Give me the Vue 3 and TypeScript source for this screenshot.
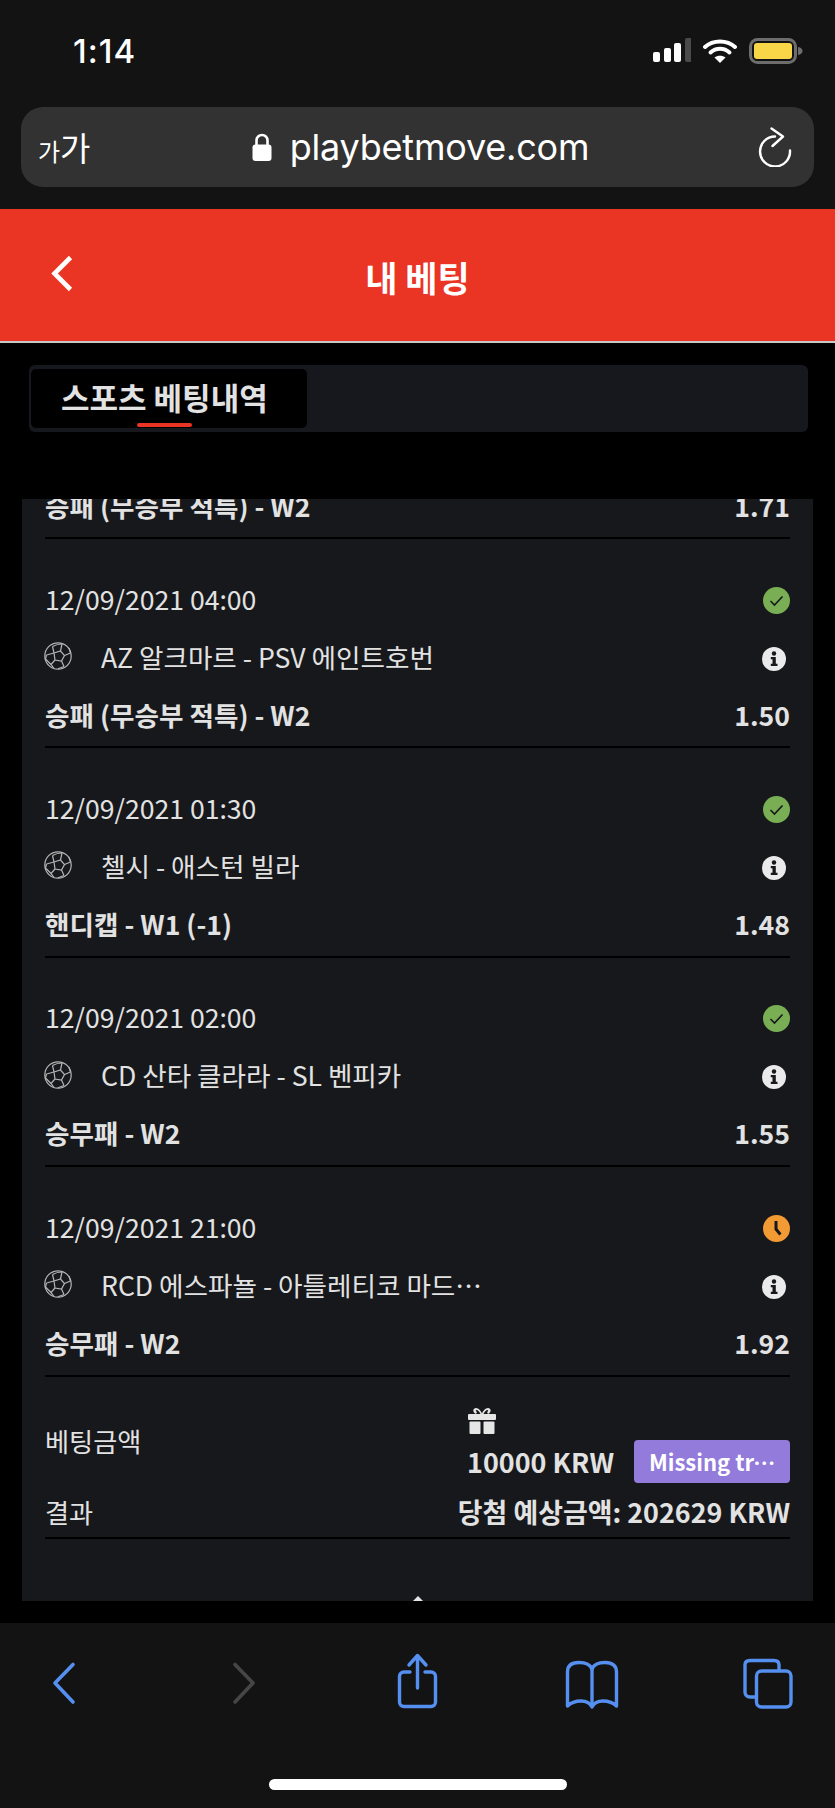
<script setup lang="ts">
interface Bet {
  date: string;
  game: string;
  market: string;
  odds: string;
  status: 'won' | 'pending';
}

const bets: Bet[] = [
  { date: '12/09/2021 04:00', game: 'AZ 알크마르 - PSV 에인트호번', market: '승패 (무승부 적특) - W2', odds: '1.50', status: 'won' },
  { date: '12/09/2021 01:30', game: '첼시 - 애스턴 빌라', market: '핸디캡 - W1 (-1)', odds: '1.48', status: 'won' },
  { date: '12/09/2021 02:00', game: 'CD 산타 클라라 - SL 벤피카', market: '승무패 - W2', odds: '1.55', status: 'won' },
  { date: '12/09/2021 21:00', game: 'RCD 에스파뇰 - 아틀레티코 마드리드', market: '승무패 - W2', odds: '1.92', status: 'pending' },
];
</script>

<template>
  <div class="screen">
    <!-- Browser chrome, top -->
    <header class="browser-top">
      <div class="status-bar">
        <span class="time">1:14</span>
        <div class="status-icons">
          <svg width="38" height="25" viewBox="0 0 38 25">
            <rect x="0" y="14" width="7" height="10" rx="2" fill="#fff" />
            <rect x="11" y="10" width="7" height="14" rx="2" fill="#fff" />
            <rect x="21" y="5" width="7" height="19" rx="2" fill="#fff" />
            <rect x="32" y="0" width="7" height="24" rx="2" fill="#4a4a4a" />
          </svg>
          <svg width="34" height="25" viewBox="0 0 34 25">
            <path d="M2 9C10 1.500 24 1.500 32 9" fill="none" stroke="#fff" stroke-width="4" stroke-linecap="round" />
            <path d="M7.500 14.500C13 9.500 21 9.500 26.500 14.500" fill="none" stroke="#fff" stroke-width="4" stroke-linecap="round" />
            <path d="M17 25L11.500 19.500C14.500 17 19.500 17 22.500 19.500Z" fill="#fff" />
          </svg>
          <svg width="54" height="26" viewBox="0 0 54 26">
            <rect x="1.500" y="1.500" width="45" height="23" rx="7" fill="none" stroke="#6d6d6d" stroke-width="3" />
            <rect x="5" y="5" width="38" height="16" rx="3" fill="#f8d648" />
            <path d="M49 9C52 9.500 53.500 11 53.500 13C53.500 15 52 16.500 49 17Z" fill="#6d6d6d" />
          </svg>
        </div>
      </div>
      <div class="url-bar">
        <span class="text-size"><small>가</small>가</span>
        <div class="url">
          <svg width="20" height="28" viewBox="0 0 20 28">
            <path d="M4.500 13V7.500C4.500 4 7 2 10 2C13 2 15.500 4 15.500 7.500V13" fill="none" stroke="#fff" stroke-width="2.600" />
            <rect x="0.500" y="11.500" width="19" height="16.500" rx="3" fill="#fff" />
          </svg>
          <span>playbetmove.com</span>
        </div>
        <svg class="reload" width="34" height="40" viewBox="0 0 34 40">
          <path d="M32 23.500A15 15 0 1 1 17 9.500" fill="none" stroke="#fff" stroke-width="2.400" stroke-linecap="round" />
          <path d="M13.500 1.500L25 9.500L14.500 19" fill="none" stroke="#fff" stroke-width="2.400" stroke-linecap="round" stroke-linejoin="round" />
        </svg>
      </div>
    </header>

    <!-- Page header -->
    <div class="page-header">
      <svg class="back" width="22" height="37" viewBox="0 0 22 37">
        <path d="M19.500 2.500L3.500 18.500L19.500 34.500" fill="none" stroke="#fff" stroke-width="4.600" />
      </svg>
      <h1>내 베팅</h1>
    </div>

    <!-- Tabs -->
    <div class="tabs">
      <div class="tab">
        스포츠 베팅내역
        <i class="tab-line" />
      </div>
    </div>

    <!-- Coupon -->
    <section class="card">
      <div class="market-row clipped">
        <span>승패 (무승부 적특) - W2</span>
        <span>1.71</span>
      </div>

      <article v-for="bet in bets" :key="bet.date" class="bet">
        <div class="bet-date">
          <span>{{ bet.date }}</span>
          <svg v-if="bet.status === 'won'" width="27" height="27" viewBox="0 0 27 27">
            <circle cx="13.500" cy="13.500" r="13.500" fill="#7aae55" />
            <path d="M7.500 14L11.500 18L19.500 9.500" fill="none" stroke="#17181c" stroke-width="1.600" />
          </svg>
          <svg v-else width="27" height="27" viewBox="0 0 27 27">
            <circle cx="13.500" cy="13.500" r="13.500" fill="#f29a33" />
            <path d="M11.500 6H14.500V13.500L18.500 18.500L16.300 20.500L11.500 14.800Z" fill="#17181c" />
          </svg>
        </div>
        <div class="bet-game">
          <svg class="ball" width="28" height="28" viewBox="0 0 28 28" fill="none" stroke="#b4b4b4" stroke-width="1.200">
            <circle cx="14" cy="14" r="13.200" />
            <path d="M10 11L16.500 9L20.500 13.500L17.500 19L11 18Z" />
            <path d="M10 11L8.500 4.500M16.500 9L18 2M20.500 13.500L26.500 11M17.500 19L20 24.500M11 18L7 22.500M10 11L2.500 13" />
            <path d="M8.500 4.500C12 2.500 15 2 18 2M2.500 13L1.500 17L7 22.500L10 26.500M20 24.500L14 26.800M26.500 11L25 6" />
          </svg>
          <span class="game-name">{{ bet.game }}</span>
          <svg class="info" width="24" height="24" viewBox="0 0 24 24">
            <circle cx="12" cy="12" r="12" fill="#eaeaea" />
            <circle cx="12" cy="6.500" r="2.200" fill="#17181c" />
            <path d="M8.800 10H13.800V16.800H15.500V19H8.800V16.800H10.500V12.200H8.800Z" fill="#17181c" />
          </svg>
        </div>
        <div class="market-row">
          <span>{{ bet.market }}</span>
          <span>{{ bet.odds }}</span>
        </div>
      </article>

      <div class="summary">
        <div class="summary-row stake-row">
          <span class="label stake-label">베팅금액</span>
          <div class="stake">
            <svg width="28" height="27" viewBox="0 0 28 27" fill="#e6e6e6">
              <path d="M8 7C4 5 5 1 8 1C10.500 1 13 4 14 6.500C15 4 17.500 1 20 1C23 1 24 5 20 7L19 5C20.500 4.500 20.500 3 19.500 3C18 3 16.500 5 15.500 7H12.500C11.500 5 10 3 8.500 3C7.500 3 7.500 4.500 9 5Z" />
              <rect x="0" y="7" width="28" height="6" rx="1" />
              <rect x="1.500" y="14.500" width="11" height="12.500" rx="1" />
              <rect x="15.500" y="14.500" width="11" height="12.500" rx="1" />
            </svg>
            <div class="stake-line">
              <span class="amount">10000 KRW</span>
              <span class="badge">Missing translation</span>
            </div>
          </div>
        </div>
        <div class="summary-row result-row">
          <span class="label">결과</span>
          <span class="amount">당첨 예상금액: 202629 KRW</span>
        </div>
      </div>
      <i class="caret" />
    </section>

    <!-- Browser chrome, bottom -->
    <footer class="browser-bottom">
      <div class="toolbar">
        <svg width="64" height="64" viewBox="0 0 64 64" fill="none" stroke="#5590f0" stroke-width="3.600" stroke-linecap="round" stroke-linejoin="round">
          <path d="M41 15.500L23 34L41 53" />
        </svg>
        <svg width="64" height="64" viewBox="0 0 64 64" fill="none" stroke="#464646" stroke-width="3.600" stroke-linecap="round" stroke-linejoin="round">
          <path d="M27 15.500L45 34L27 53" />
        </svg>
        <svg width="64" height="64" viewBox="0 0 64 64" fill="none" stroke="#5590f0" stroke-width="3.400" stroke-linecap="round" stroke-linejoin="round">
          <path d="M26 23H20C17.500 23 15.500 25 15.500 27.500V53C15.500 55.500 17.500 57.500 20 57.500H47C49.500 57.500 51.500 55.500 51.500 53V27.500C51.500 25 49.500 23 47 23H41" />
          <path d="M33.500 39V7M25 16L33.500 6.500L42 16" />
        </svg>
        <svg width="64" height="64" viewBox="0 0 64 64" fill="none" stroke="#5590f0" stroke-width="3.400" stroke-linejoin="round">
          <path d="M33 20C31 15 26 13.500 20 13.500C12 13.500 8.500 17 8.500 23V57C13 52.500 18 52 22 52C27 52 31 54 33 58C35 54 39 52 44 52C48 52 53 52.500 57.500 57V23C57.500 17 54 13.500 46 13.500C40 13.500 35 15 33 20Z" />
          <path d="M33 20V57" />
        </svg>
        <svg width="64" height="64" viewBox="0 0 64 64" fill="none" stroke="#5590f0" stroke-width="3.400">
          <path d="M20 48H15C12 48 10 46 10 43V16C10 13 12 11.500 15 11.500H39C42 11.500 44 13 44 16V21" />
          <rect x="21.500" y="22" width="34.500" height="36" rx="5" />
        </svg>
      </div>
      <div class="home-bar" />
    </footer>
  </div>
</template>

<style>
html, body { background: #000; }
</style>

<style scoped>
.screen {
  width: 835px;
  height: 1808px;
  display: flex;
  flex-direction: column;
  background: #000;
  overflow: hidden;
  font-family: "Noto Sans CJK KR", "Noto Sans", sans-serif;
  color: #e2e2e2;
}

.browser-top {
  height: 209px;
  flex: none;
  background: #131313;
  box-sizing: border-box;
}
.status-bar {
  height: 107px;
  box-sizing: border-box;
  padding: 38px 32px 0 73px;
  display: flex;
  justify-content: space-between;
  align-items: flex-start;
}
.time {
  font-family: Inter, sans-serif;
  font-size: 33px;
  font-weight: 500;
  line-height: 26px;
  color: #fff;
  letter-spacing: 1px;
}
.status-icons { display: flex; gap: 12px; }
.url-bar {
  margin: 0 21px;
  height: 80px;
  background: #323232;
  border-radius: 22px;
  display: grid;
  grid-template-columns: 1fr auto 1fr;
  align-items: center;
  padding: 0 22px 0 17px;
  color: #fff;
}
.text-size { font-size: 33px; line-height: 1; }
.text-size small { font-size: 24px; }
.url {
  display: flex;
  align-items: center;
  gap: 18px;
  margin-left: 11px;
  font-family: Inter, sans-serif;
  font-size: 36px;
  letter-spacing: -0.2px;
}
.reload { justify-self: end; }

.page-header {
  flex: none;
  height: 134px;
  box-sizing: border-box;
  background: #ea3424;
  border-bottom: 2px solid #c8c8c8;
  display: grid;
  grid-template-columns: 1fr auto 1fr;
  align-items: center;
}
.back { margin: -4px 0 0 51px; }
.page-header h1 {
  margin: 2px 0 0;
  font-size: 35px;
  font-weight: 700;
  color: #fff;
}

.tabs {
  flex: none;
  height: 67px;
  margin: 22px 27px 67px 29px;
  box-sizing: border-box;
  padding: 4px 2px;
  background: #17181d;
  border-radius: 6px;
  display: flex;
}
.tab {
  position: relative;
  width: 276px;
  box-sizing: border-box;
  padding-left: 30px;
  background: #000;
  border-radius: 5px;
  font-size: 31px;
  font-weight: 700;
  line-height: 56px;
  color: #e2e2e2;
}
.tab-line {
  position: absolute;
  left: 106px;
  bottom: 1px;
  width: 55px;
  height: 4px;
  border-radius: 2px;
  background: #ea3424;
}

.card {
  position: relative;
  flex: none;
  height: 1102px;
  margin: 0 22px;
  padding: 0 23px;
  box-sizing: border-box;
  background: #17181c;
  overflow: hidden;
}
.bet, .clipped {
  border-bottom: 2px solid #000;
}
.market-row.clipped {
  height: 40px;
  box-sizing: border-box;
  align-items: flex-start;
  line-height: 14px;
}
.bet {
  height: 209.4px;
  box-sizing: border-box;
  padding-top: 39px;
}
.bet-date, .bet-game, .market-row {
  display: flex;
  align-items: center;
  justify-content: space-between;
}
.bet-date {
  height: 40px;
  font-size: 26.6px;
}
.bet-date svg { margin-top: 4px; }
.bet-game {
  height: 40px;
  margin-top: 18px;
  font-size: 26.6px;
  justify-content: flex-start;
}
.ball { margin-left: -1px; flex: none; }
.game-name {
  width: 388px;
  margin-left: 29px;
  white-space: nowrap;
  overflow: hidden;
  text-overflow: ellipsis;
}
.info { margin: 5px 4px 0 auto; }
.market-row {
  font-size: 26.6px;
  font-weight: 700;
}
.bet .market-row { height: 40px; margin-top: 18px; }

.summary {
  padding-top: 30px;
  border-bottom: 2px solid #000;
  height: 162px;
  box-sizing: border-box;
}
.summary-row {
  display: flex;
  justify-content: space-between;
  align-items: center;
}
.label { font-size: 26.2px; }
.stake-label { margin-top: -8px; }
.amount { font-size: 26.9px; font-weight: 700; }
.stake svg { display: block; margin-left: 1px; }
.stake-line {
  display: flex;
  align-items: center;
  gap: 20px;
  margin-top: 6px;
}
.badge {
  width: 156px;
  height: 43px;
  box-sizing: border-box;
  padding: 0 8px 0 15px;
  border-radius: 4px;
  background: #937bdb;
  color: #fff;
  font-size: 22px;
  font-weight: 700;
  line-height: 42px;
  white-space: nowrap;
  overflow: hidden;
  text-overflow: ellipsis;
}
.result-row { height: 40px; margin-top: 9px; }

.caret {
  position: absolute;
  left: 391px;
  bottom: 0;
  width: 0;
  height: 0;
  border-left: 5px solid transparent;
  border-right: 5px solid transparent;
  border-bottom: 5px solid #e6e6e6;
}

.browser-bottom {
  margin-top: auto;
  height: 185px;
  flex: none;
  background: #131313;
  display: flex;
  flex-direction: column;
}
.toolbar {
  display: flex;
  justify-content: space-between;
  padding: 26px 36px 0 32px;
}
.home-bar {
  width: 298px;
  height: 11px;
  margin: auto auto 18px;
  background: #fff;
  border-radius: 6px;
}
</style>
